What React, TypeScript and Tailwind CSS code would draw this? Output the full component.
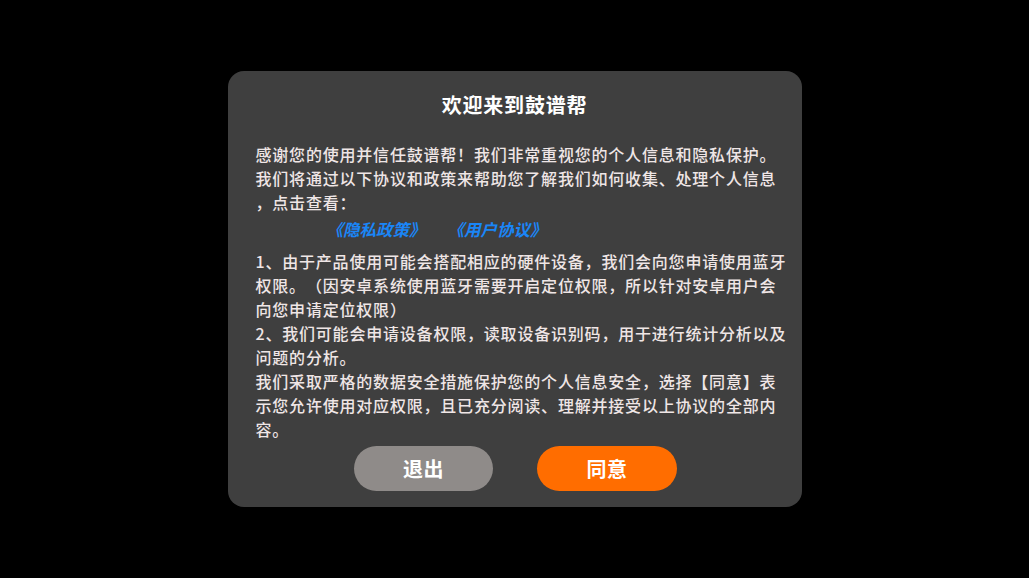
import React from "react";

const lines1 = [
  "感谢您的使用并信任鼓谱帮！我们非常重视您的个人信息和隐私保护。",
  "我们将通过以下协议和政策来帮助您了解我们如何收集、处理个人信息",
  "，点击查看：",
];
const lines2 = [
  "1、由于产品使用可能会搭配相应的硬件设备，我们会向您申请使用蓝牙",
  "权限。（因安卓系统使用蓝牙需要开启定位权限，所以针对安卓用户会",
  "向您申请定位权限）",
  "2、我们可能会申请设备权限，读取设备识别码，用于进行统计分析以及",
  "问题的分析。",
  "我们采取严格的数据安全措施保护您的个人信息安全，选择【同意】表",
  "示您允许使用对应权限，且已充分阅读、理解并接受以上协议的全部内",
  "容。",
];

export default function App() {
  return (
    <div
      className="w-[1029px] h-[578px] bg-black flex items-center justify-center [text-spacing-trim:space-all]"
      style={{ fontFamily: '"Noto Sans CJK SC", "Noto Sans", sans-serif' }}
    >
      <div className="w-[574px] h-[436px] bg-[#3f3f3f] rounded-[16px] flex flex-col pt-[20px] px-[28px]">
        <div className="text-center text-white text-[20px] leading-[28px] font-bold tracking-[0.8px]">
          欢迎来到鼓谱帮
        </div>
        <div className="mt-[23px] text-[#efe6e6] text-[16px] leading-[24px] font-medium tracking-[0.8px]">
          {lines1.map((l, i) => (
            <div key={i} className="whitespace-nowrap">{l}</div>
          ))}
          <div className="h-[30px] flex items-center pl-[71px] gap-[22px] text-[#1a86f7] italic font-bold mb-[5px] tracking-[0px] text-[16.5px]">
            <span>《隐私政策》</span>
            <span>《用户协议》</span>
          </div>
          {lines2.map((l, i) => (
            <div key={i} className="whitespace-nowrap">{l}</div>
          ))}
        </div>
        <div className="mt-[5px] flex justify-center gap-[44px] pl-[2px]">
          <button className="w-[139px] h-[45px] rounded-full bg-[#8f8b89] text-white text-[20px] font-bold flex items-center justify-center tracking-[0.5px]">
            退出
          </button>
          <button className="w-[140px] h-[45px] rounded-full bg-[#ff6d00] text-white text-[20px] font-bold flex items-center justify-center tracking-[0.5px]">
            同意
          </button>
        </div>
      </div>
    </div>
  );
}
